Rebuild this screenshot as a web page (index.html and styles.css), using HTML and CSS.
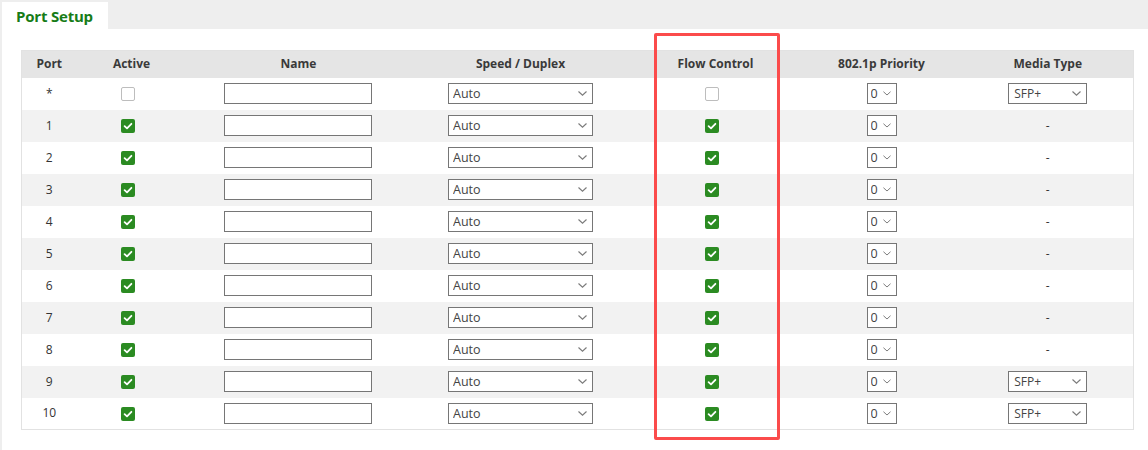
FILE: index.html
```html
<!DOCTYPE html>
<html>
<head>
<meta charset="utf-8">
<link rel="stylesheet" href="styles.css">
</head>
<body>
<div class="tabs">
  <div class="tab">Port Setup</div>
</div>
<div class="panel">
  <table class="grid">
    <colgroup>
      <col class="c-port"><col class="c-active"><col class="c-name"><col class="c-speed"><col class="c-flow"><col class="c-prio"><col class="c-media">
    </colgroup>
    <thead>
      <tr><th>Port</th><th>Active</th><th>Name</th><th>Speed / Duplex</th><th>Flow Control</th><th>802.1p Priority</th><th>Media Type</th></tr>
    </thead>
    <tbody id="rows"></tbody>
  </table>
  <div class="highlight"></div>
</div>
<script src="app.js"></script>
</body>
</html>
```

FILE: app.js
```js
const rows = ['*','1','2','3','4','5','6','7','8','9','10'];
const tb = document.getElementById('rows');
const check = (on) => on
  ? '<span class="cb on"><svg viewBox="0 0 14 14" width="14" height="14"><path d="M3.6 7.2 L6 9.4 L10.4 4.8" fill="none" stroke="#fff" stroke-width="1.8" stroke-linecap="round" stroke-linejoin="round"/></svg></span>'
  : '<span class="cb"></span>';
const chev = '<svg class="chev" viewBox="0 0 9 5" width="9" height="5"><path d="M0.5 0.5 L4.5 4.2 L8.5 0.5" fill="none" stroke="#7a7a7a" stroke-width="1.1"/></svg>';
const sel = (cls, v) => '<span class="selw ' + cls + '"><select class="sel"><option>' + v + '</option></select>' + chev + '</span>';
rows.forEach((p, i) => {
  const tr = document.createElement('tr');
  const media = (p === '*' || p === '9' || p === '10')
    ? sel('media', 'SFP+')
    : '<span class="dash">-</span>';
  tr.innerHTML =
    '<td>' + p + '</td>' +
    '<td>' + check(i > 0) + '</td>' +
    '<td><input class="txt" type="text"></td>' +
    '<td>' + sel('speed', 'Auto') + '</td>' +
    '<td>' + check(i > 0) + '</td>' +
    '<td>' + sel('prio', '0') + '</td>' +
    '<td>' + media + '</td>';
  tb.appendChild(tr);
});
```

FILE: styles.css
```css
html, body { margin: 0; padding: 0; }
body {
  background: #eeeeee;
  font-family: "Open Sans", "Liberation Sans", sans-serif;
  color: #333;
  width: 1148px;
  height: 450px;
  overflow: hidden;
  position: relative;
}
.tabs {
  display: flex;
  height: 29px;
  padding-left: 2px;
  align-items: flex-end;
}
.tab {
  background: #fff;
  width: 106px;
  height: 27px;
  box-sizing: border-box;
  padding-left: 14px;
  font-size: 15px;
  font-weight: bold;
  color: #177c17;
  line-height: 28px;
  letter-spacing: -0.2px;
}
.panel {
  background: #fff;
  margin-left: 2px;
  padding: 21px 15px 0 19px;
  height: 421px;
  box-sizing: border-box;
}
.grid {
  border-collapse: collapse;
  width: 1112px;
  table-layout: fixed;
  border: 1px solid #e2e2e2;
}
.c-port { width: 55px; }
.c-active { width: 110px; }
.c-name { width: 224px; }
.c-speed { width: 220px; }
.c-flow { width: 170px; }
.c-prio { width: 162px; }
.c-media { width: 171px; }
thead tr { height: 27px; }
th {
  background: #e5e5e5;
  padding: 0;
  line-height: 16px;
  font-size: 12px;
  font-weight: bold;
  color: #3a3a3a;
  text-align: center;
}
tbody tr { height: 32px; }
td {
  padding: 0;
  line-height: 16px;
  text-align: center;
  font-size: 12px;
  color: #333;
}
tbody tr:nth-child(even) td { background: #f2f2f2; }
.cb {
  display: inline-block;
  width: 14px;
  height: 14px;
  box-sizing: border-box;
  border: 1.5px solid #bdbdbd;
  border-radius: 2px;
  background: #fff;
  vertical-align: middle;
  margin-right: 8px;
}
.cb svg { display: block; }
.cb.on { background: #2b8b22; border: none; }
.txt {
  width: 148px;
  height: 21px;
  box-sizing: border-box;
  border: 1px solid #767676;
  border-radius: 0;
  margin: 0 0 0 -2px;
  padding: 0;
  vertical-align: middle;
}
.selw {
  position: relative;
  display: inline-block;
  vertical-align: middle;
  height: 21px;
}
.sel {
  -webkit-appearance: none;
  appearance: none;
  display: block;
  width: 100%;
  height: 21px;
  box-sizing: border-box;
  border: 1px solid #767676;
  border-radius: 0;
  background: #fff;
  font-family: "Open Sans", "Liberation Sans", sans-serif;
  font-size: 12.5px;
  color: #444;
  margin: 0;
  padding: 0 0 0 4px;
  outline: none;
}
.chev {
  position: absolute;
  right: 6px;
  top: 8px;
  pointer-events: none;
}
.speed { width: 145px; }
.prio { width: 30px; }
.prio .sel { padding-left: 3px; }
.prio .chev { right: 6px; width: 8px; }
.media { width: 79px; }
.media .sel { font-size: 12px; padding-left: 5px; }
.dash { font-size: 12px; }
.highlight {
  position: absolute;
  left: 654px;
  top: 33px;
  width: 126px;
  height: 407px;
  box-sizing: border-box;
  border: 3px solid #fb4b4b;
  border-radius: 2px;
}
```
